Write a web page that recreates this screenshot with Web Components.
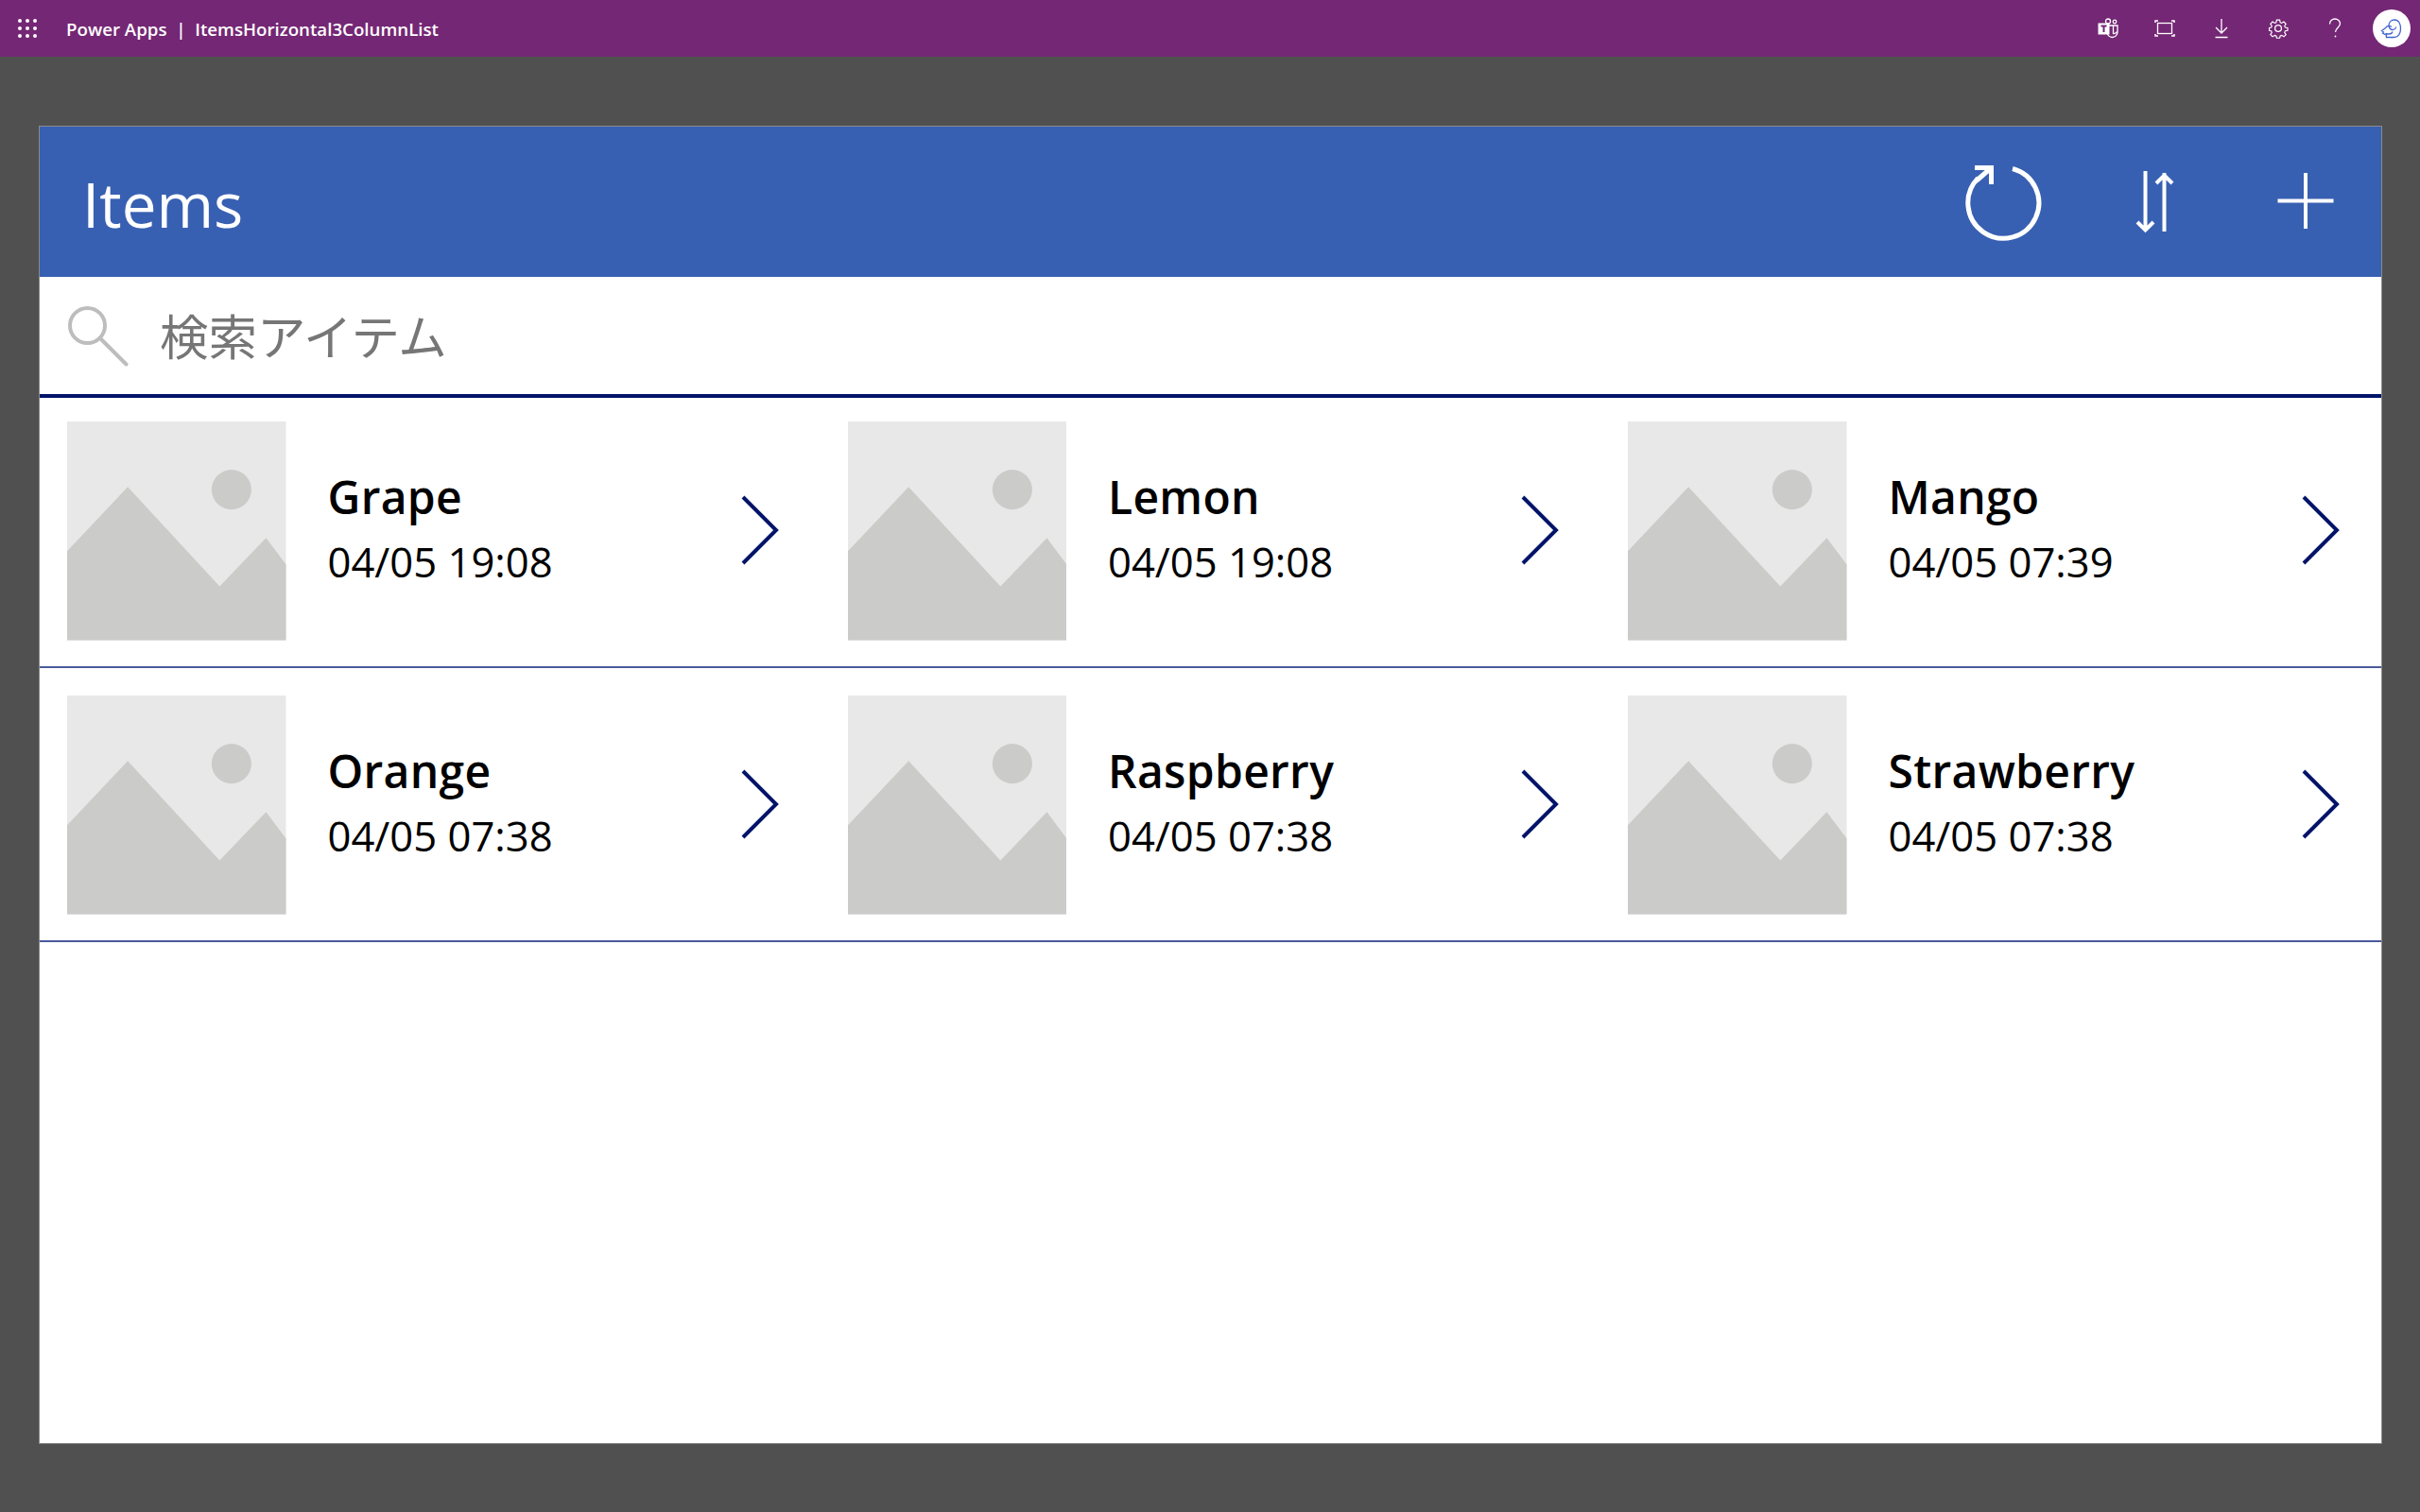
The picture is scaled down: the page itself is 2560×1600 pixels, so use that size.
<!DOCTYPE html>
<html>
<head>
<meta charset="utf-8">
<style>
html, body { margin: 0; height: 100%; }
body { background: #505050; font-family: "Open Sans", sans-serif; }
</style>
</head>
<body>
<suite-bar app="Power Apps" name="ItemsHorizontal3ColumnList"></suite-bar>
<app-canvas>
	<items-header title-text="Items"></items-header>
	<search-box placeholder="検索アイテム"></search-box>
	<item-gallery>
		<gallery-item name="Grape" stamp="04/05 19:08"></gallery-item>
		<gallery-item name="Lemon" stamp="04/05 19:08"></gallery-item>
		<gallery-item name="Mango" stamp="04/05 07:39"></gallery-item>
		<gallery-item name="Orange" stamp="04/05 07:38"></gallery-item>
		<gallery-item name="Raspberry" stamp="04/05 07:38"></gallery-item>
		<gallery-item name="Strawberry" stamp="04/05 07:38"></gallery-item>
	</item-gallery>
</app-canvas>
<script>
class SuiteBar extends HTMLElement {
	constructor() {
		super();
		this.attachShadow({ mode: "open" });
		this.shadowRoot.innerHTML = `
		<style>
			:host { display: flex; align-items: center; height: 60px; background: #742774; color: #fff; font-family: "Open Sans", sans-serif; font-size: 18.7px; font-weight: 600; }
			.waffle { width: 20px; height: 20px; margin-left: 19px; flex: none; display: block; }
			.title { margin-left: 31px; white-space: pre; }
			.right { margin-left: auto; display: flex; align-items: center; }
			.btn { width: 60px; height: 60px; display: flex; align-items: center; justify-content: center; }
			.btn svg { display: block; }
			.me { width: 40px; height: 40px; border-radius: 50%; background: #fff; margin: 0 10px; }
			.me svg { display: block; }
		</style>
		<svg class="waffle" viewBox="0 0 20 20" fill="#fff">
			<circle cx="2" cy="2" r="2"/><circle cx="10" cy="2" r="2"/><circle cx="18" cy="2" r="2"/>
			<circle cx="2" cy="10" r="2"/><circle cx="10" cy="10" r="2"/><circle cx="18" cy="10" r="2"/>
			<circle cx="2" cy="18" r="2"/><circle cx="10" cy="18" r="2"/><circle cx="18" cy="18" r="2"/>
		</svg>
		<div class="title">${this.getAttribute("app")}  |  ${this.getAttribute("name")}</div>
		<div class="right">
			<div class="btn"><svg width="22" height="22" viewBox="0 0 22 22" fill="none" stroke="#fff" stroke-width="1.3">
				<circle cx="11" cy="3.5" r="2.5"/><circle cx="18" cy="4" r="1.8"/>
				<path d="M9 8h12v7a5.5 5.5 0 0 1-11 0"/><path d="M16.5 8v8.500a4 4 0 0 0 4-2"/>
				<rect x="0.5" y="5.5" width="12" height="12" fill="#fff" stroke="none"/>
				<path d="M3.5 8.5h6M6.5 8.5v6.5" stroke="#742774" stroke-width="2"/>
			</svg></div>
			<div class="btn"><svg width="22" height="18" viewBox="0 0 22 18" fill="none" stroke="#fff" stroke-width="1.3">
				<rect x="3.5" y="3.5" width="15" height="11"/>
				<path d="M1 3V1h3M18 1h3v2M1 15v2h3M18 17h3v-2" stroke-width="1.5"/>
			</svg></div>
			<div class="btn"><svg width="16" height="22" viewBox="0 0 16 22" fill="none" stroke="#fff" stroke-width="1.3">
				<path d="M8 1v15M2 10l6 6 6-6M1.5 20.5h13"/>
			</svg></div>
			<div class="btn"><svg width="22" height="22" viewBox="0 0 22 22" fill="none" stroke="#fff" stroke-width="1.3">
				<circle cx="11" cy="11" r="3.4"/>
				<path d="M9.2 1.2h3.6l.6 2.9 1.7.7 2.5-1.6 2.5 2.5-1.6 2.5.7 1.7 2.9.6v3l-2.9.6-.7 1.7 1.6 2.5-2.5 2.5-2.5-1.6-1.7.7-.6 2.5H9.2l-.6-2.5-1.7-.7-2.5 1.6-2.5-2.5 1.6-2.5-.7-1.7-2.3-.6v-3l2.3-.6.7-1.7-1.6-2.5 2.5-2.5 2.5 1.6 1.7-.7z" transform="translate(1.1 1.1) scale(.9)"/>
			</svg></div>
			<div class="btn"><svg width="14" height="22" viewBox="0 0 14 22" fill="none" stroke="#fff" stroke-width="1.3">
				<path d="M1.5 6.5C1.5 3.2 4 1 7 1s5.5 2.2 5.5 5c0 4-5 4.5-5 9"/>
				<circle cx="7.5" cy="19.5" r=".9" fill="#fff" stroke="none"/>
			</svg></div>
			<div class="me"><svg width="40" height="40" viewBox="0 0 40 40" fill="none" stroke="#4463d0" stroke-width="1.3">
				<path d="M20 29.5h3c4 0 6.500-4 6.500-9 0-5-2-9.500-6.500-9.500-3.500 0-6 2.500-6 6 0 2.500 2 4.500 4 4.500s3.500-1.500 3.500-3"/>
				<path d="M20 18.500c-1.500-1-3.500-1.500-5-.5l-2 2-3.500 2.500 2 1.500-1 1 2.500 1.500 1.500-1c1 .5 2 .5 3 .5 1.500 0 3-1 3.500-2.500"/>
				<path d="M15.500 26c-1.500 1-1.500 2.500-1 3.500h6"/>
			</svg></div>
		</div>
		`;
	}
}

class AppCanvas extends HTMLElement {
	constructor() {
		super();
		this.attachShadow({ mode: "open" });
		this.shadowRoot.innerHTML = `
		<style>
			:host { display: block; margin: 73px 40px 0 41px; height: 1395px; background: #fff; border: 1px solid #8a8a8a; box-sizing: border-box; }
		</style>
		<slot></slot>
		`;
	}
}

class ItemsHeader extends HTMLElement {
	constructor() {
		super();
		this.attachShadow({ mode: "open" });
		this.shadowRoot.innerHTML = `
		<style>
			:host { display: flex; align-items: center; height: 159px; background: #3860b2; color: #fff; font-family: "Open Sans", sans-serif; }
			.title { font-size: 65.5px; margin-left: 45px; line-height: 159px; position: relative; top: 2px; }
			.tools { margin-left: auto; display: flex; }
			.tool { width: 160px; height: 159px; display: flex; align-items: center; justify-content: center; }
			.tool svg { display: block; }
		</style>
		<div class="title">${this.getAttribute("title-text")}</div>
		<div class="tools">
			<div class="tool"><svg width="160" height="159" viewBox="0 0 160 159" fill="none" stroke="#fff" stroke-width="5">
				<path d="M90 44.5A37.5 37.5 0 1 1 53.5 54.5"/>
				<path d="M50 43.5H67.5V61"/><path d="M67.5 43.5 52 57"/>
			</svg></div>
			<div class="tool"><svg width="160" height="159" viewBox="0 0 160 159" fill="none" stroke="#fff" stroke-width="4">
				<path d="M70.5 47v62M62 101l8.500 8.500 8.500-8.500"/>
				<path d="M90.5 111V49M82 60l8.500-8.500 8.500 8.500"/>
			</svg></div>
			<div class="tool"><svg width="160" height="159" viewBox="0 0 160 159" fill="none" stroke="#fff" stroke-width="4">
				<path d="M80 49v59M50.5 78.5h59"/>
			</svg></div>
		</div>
		`;
	}
}

class SearchBox extends HTMLElement {
	constructor() {
		super();
		this.attachShadow({ mode: "open" });
		this.shadowRoot.innerHTML = `
		<style>
			:host { display: flex; align-items: center; height: 124px; }
			svg { display: block; margin: 2px 0 0 30px; flex: none; }
			.hint { margin: -2px 0 0 33px; font-size: 51.5px; color: #767676; font-family: "Noto Sans CJK JP", sans-serif; font-weight: 400; line-height: 60px; white-space: nowrap; }
		</style>
		<svg width="64" height="64" viewBox="0 0 64 64" fill="none" stroke="#bdbdbd" stroke-width="4">
			<circle cx="20.5" cy="20.5" r="18.5"/>
			<path d="M34 34 61.5 61.5" stroke-linecap="round"/>
		</svg>
		<div class="hint">${this.getAttribute("placeholder")}</div>
		`;
	}
}

class ItemGallery extends HTMLElement {
	constructor() {
		super();
		this.attachShadow({ mode: "open" });
		this.shadowRoot.innerHTML = `
		<style>
			:host { display: block; position: relative; }
			:host::before { content: ""; position: absolute; left: 0; right: 0; top: 0; height: 4px; background: #001469; }
			.grid { display: grid; grid-template-columns: 825.5px 825.5px 1fr; grid-auto-rows: 290px; }
			::slotted(gallery-item) { border-bottom: 2px solid #4a5a9c; }
		</style>
		<div class="grid"><slot></slot></div>
		`;
	}
}

class GalleryItem extends HTMLElement {
	constructor() {
		super();
		this.attachShadow({ mode: "open" });
		this.shadowRoot.innerHTML = `
		<style>
			:host { display: flex; align-items: flex-start; box-sizing: border-box; height: 290px; padding: 29px 0 0 29px; font-family: "Open Sans", sans-serif; color: #000; }
			.pic { display: block; width: 231.5px; height: 231.5px; flex: none; }
			.text { margin-left: 44px; width: 436px; padding-top: 47px; }
			.name { font-size: 48px; font-weight: 600; line-height: 66px; letter-spacing: .3px; }
			.stamp { font-size: 43.6px; line-height: 66px; margin-top: 2px; }
			.go { display: block; flex: none; margin-top: 78px; }
		</style>
		<svg class="pic" viewBox="0 0 231 231">
			<rect width="231" height="231" fill="#e8e8e8"/>
			<circle cx="173.5" cy="72" r="21" fill="#cbcbc9"/>
			<path d="M0 137 64 69 161 174 210 123 231 151V231H0Z" fill="#cbcbc9"/>
		</svg>
		<div class="text">
			<div class="name">${this.getAttribute("name")}</div>
			<div class="stamp">${this.getAttribute("stamp")}</div>
		</div>
		<svg class="go" width="42" height="74" viewBox="0 0 42 74" fill="none" stroke="#001469" stroke-width="4">
			<path d="M3 2 38 37 3 72"/>
		</svg>
		`;
	}
}

customElements.define("suite-bar", SuiteBar);
customElements.define("app-canvas", AppCanvas);
customElements.define("items-header", ItemsHeader);
customElements.define("search-box", SearchBox);
customElements.define("item-gallery", ItemGallery);
customElements.define("gallery-item", GalleryItem);
</script>
</body>
</html>
